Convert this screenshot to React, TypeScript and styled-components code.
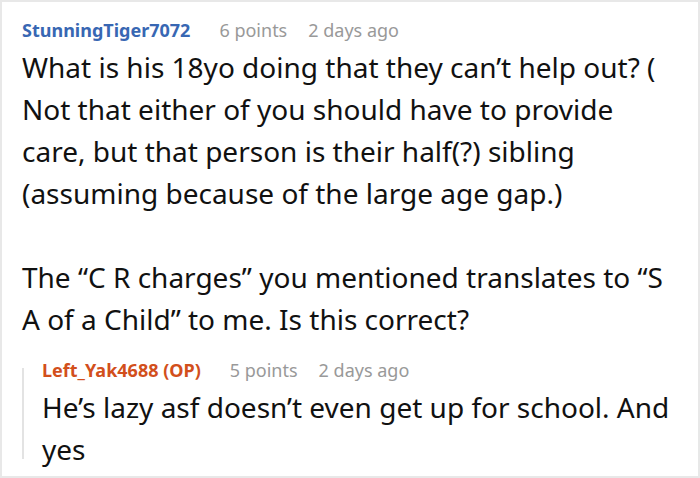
import React from "react";
import styled, { createGlobalStyle } from "styled-components";

const Global = createGlobalStyle`
  html, body { margin: 0; padding: 0; background: #fff; }
  body { font-family: "Noto Sans", "Open Sans", sans-serif; }
`;

const Card = styled.div`
  box-sizing: border-box;
  width: 700px;
  height: 478px;
  border: 2px solid #e8e8e8;
  padding: 16px 20px 0 20px;
  background: #fff;
  overflow: hidden;
`;

const Meta = styled.div`
  display: flex;
  align-items: baseline;
  gap: 21px;
  font-size: 18px;
  line-height: 24px;
  white-space: nowrap;
`;

const Author = styled.span<{ $op?: boolean }>`
  font-weight: 700;
  color: ${(p) => (p.$op ? "#d24f1c" : "#3867b3")};
  margin-right: 8px;
`;

const Muted = styled.span`
  color: #999999;
`;

const Body = styled.div`
  font-size: 28px;
  line-height: 42px;
  color: #111;
  margin-top: 4px;
  white-space: nowrap;
`;

const Para = styled.p`
  margin: 0 0 42px 0;
  &:last-child { margin-bottom: 0; }
`;

const Reply = styled.div`
  position: relative;
  margin-top: 18px;
  padding-left: 20px;

  &::before {
    content: "";
    position: absolute;
    left: 0;
    top: 10px;
    bottom: 11px;
    width: 2px;
    background: #e3e3e3;
  }
`;

function Comment({
  author,
  op,
  points,
  age,
  children,
}: {
  author: string;
  op?: boolean;
  points: string;
  age: string;
  children: React.ReactNode;
}) {
  return (
    <>
      <Meta>
        <Author $op={op}>{author}</Author>
        <Muted>{points}</Muted>
        <Muted>{age}</Muted>
      </Meta>
      <Body>{children}</Body>
    </>
  );
}

export default function App() {
  return (
    <>
      <Global />
      <Card>
        <Comment author="StunningTiger7072" points="6 points" age="2 days ago">
          <Para>
            What is his 18yo doing that they can’t help out? (
            <br />
            Not that either of you should have to provide
            <br />
            care, but that person is their half(?) sibling
            <br />
            (assuming because of the large age gap.)
          </Para>
          <Para>
            The “C R charges” you mentioned translates to “S
            <br />
            A of a Child” to me. Is this correct?
          </Para>
        </Comment>
        <Reply>
          <Comment author="Left_Yak4688 (OP)" op points="5 points" age="2 days ago">
            <Para>
              He’s lazy asf doesn’t even get up for school. And
              <br />
              yes
            </Para>
          </Comment>
        </Reply>
      </Card>
    </>
  );
}
